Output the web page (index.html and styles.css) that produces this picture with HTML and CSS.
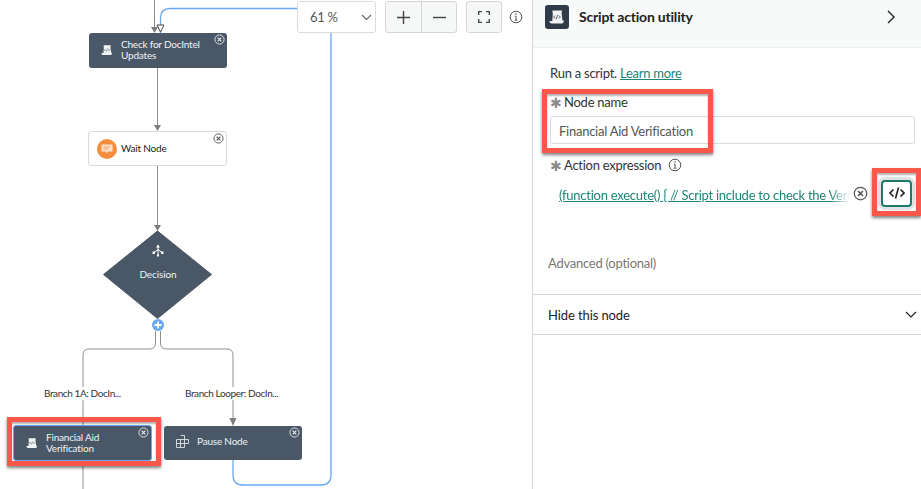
FILE: index.html
```html
<!DOCTYPE html>
<html lang="en">
<head>
    <meta charset="UTF-8">
    <title>Script action utility</title>
    <link rel="stylesheet" href="styles.css">
</head>
<body>

<svg class="defs" width="0" height="0">
    <symbol id="ico-close" viewBox="0 0 12 12">
        <circle cx="6" cy="6" r="5" fill="none" stroke="currentColor" stroke-width="1"/>
        <path d="M4 4l4 4M8 4l-4 4" fill="none" stroke="currentColor" stroke-width="1.3"/>
    </symbol>
    <symbol id="ico-info" viewBox="0 0 14 14">
        <circle cx="7" cy="7" r="5.8" fill="none" stroke="currentColor" stroke-width="1"/>
        <path d="M7 6.2v4M5.8 10.2h2.4M5.8 6.2H7" fill="none" stroke="currentColor" stroke-width="1"/>
        <circle cx="7" cy="4" r=".8" fill="currentColor"/>
    </symbol>
    <symbol id="ico-script" viewBox="0 0 16 16">
        <path d="M3.500 1.500h10c-.8 1-1 2-.8 3.500l.8 6.500h1.300c0 1.800-.8 3-2 3H2.500c-1.300 0-2-1-2-2.500h2.800L3.800 5c-.2-1.500-.5-2.700-.3-3.500z" fill="currentColor"/>
        <path d="M6 6.500L4.700 8 6 9.500M10 6.500L11.300 8 10 9.500M8.800 6 7.200 10" fill="none" stroke="var(--ico-bg)" stroke-width=".8"/>
    </symbol>
</svg>

<div class="page">
    <div class="canvas">
        <svg class="wires" width="532" height="489">
            <g fill="none" stroke="#8f8f8f" stroke-width="1">
                <path d="M154.500 0V27"/>
                <path d="M157.500 67V125"/>
                <path d="M157.500 165V225"/>
                <path d="M155.500 331V343q0 6-6 6H89q-6 0-6 6V489"/>
                <path d="M160.500 331V343q0 6 6 6H227q6 0 6 6V418"/>
            </g>
            <g fill="#7d7d7d">
                <path d="M151 27h7l-3.500 6z"/>
                <path d="M154 125h7l-3.500 6z"/>
                <path d="M154 225h7l-3.500 6z"/>
                <path d="M229.500 418h7L233 426z"/>
            </g>
            <g fill="none" stroke="#6aa8f5" stroke-width="1.300">
                <path d="M297 8.500H170q-9.500 0-9.500 9.500V33"/>
                <path d="M233 460V475q0 10 10 10H321q10 0 10-10V33"/>
            </g>
            <path d="M157 25h7l-3.500 7z" fill="#fff" stroke="#444" stroke-width="1"/>
        </svg>

        <div class="node node-dark node-check">
            <svg class="node-ico" width="12" height="12"><use href="#ico-script"/></svg>
            <span class="node-text">Check for DocIntel Updates</span>
            <svg class="node-close" width="11" height="11"><use href="#ico-close"/></svg>
        </div>

        <div class="node node-light node-wait">
            <span class="wait-ico">
                <svg width="12" height="10" viewBox="0 0 12 10">
                    <path d="M.5.5h11v7H7L5 9.500V7.500H.5z" fill="#fde3cf"/>
                    <path d="M2.500 3h7M2.500 5h5" stroke="#f68d3c" stroke-width=".8"/>
                </svg>
            </span>
            <span class="node-text">Wait Node</span>
            <svg class="node-close" width="11" height="11"><use href="#ico-close"/></svg>
        </div>

        <div class="decision">
            <svg class="decision-shape" width="110" height="90" viewBox="0 0 110 90">
                <path d="M54.500 1 108.500 44.500 54.500 88.500 .5 44.500z" fill="#4a5766" stroke="#4a5766" stroke-linejoin="round"/>
            </svg>
            <svg class="decision-ico" width="12" height="13" viewBox="0 0 12 13">
                <path d="M6 1.500V11M2 8.500 6 5.500 10 8.500" fill="none" stroke="#fff" stroke-width="1"/>
                <path d="M6 .5 8 3.500H4z" fill="#fff"/>
                <path d="M.5 7.500h2.500v2.500H.5zM9 7.500h2.500v2.500H9zM5 10.500h2v2H5z" fill="#fff"/>
            </svg>
            <span class="decision-text">Decision</span>
        </div>

        <span class="add-btn">
            <svg width="8" height="8" viewBox="0 0 8 8"><path d="M4 .5v7M.5 4h7" stroke="#fff" stroke-width="1.800"/></svg>
        </span>

        <span class="branch branch-a">Branch 1A: DocIn...</span>
        <span class="branch branch-b">Branch Looper: DocIn...</span>

        <div class="node node-dark node-selected node-aid">
            <svg class="node-ico" width="12" height="12"><use href="#ico-script"/></svg>
            <span class="node-text">Financial Aid Verification</span>
            <svg class="node-close" width="11" height="11"><use href="#ico-close"/></svg>
        </div>

        <div class="node node-dark node-pause">
            <svg class="node-ico" width="13" height="13" viewBox="0 0 13 13">
                <path d="M4.500.5h4v12h-8v-8h12v4H.500M4.500 4.500v8" fill="none" stroke="#dfe3e7" stroke-width=".9"/>
            </svg>
            <span class="node-text">Pause Node</span>
            <svg class="node-close" width="11" height="11"><use href="#ico-close"/></svg>
        </div>

        <div class="toolbar">
            <div class="zoom-select">
                <span>61 %</span>
                <svg width="11" height="7" viewBox="0 0 11 7"><path d="M1 1l4.500 4.500L10 1" fill="none" stroke="#666" stroke-width="1.100"/></svg>
            </div>
            <div class="btn-group">
                <span class="tool-btn">
                    <svg width="13" height="13" viewBox="0 0 13 13"><path d="M6.500 0v13M0 6.500h13" stroke="#444" stroke-width="1.400"/></svg>
                </span>
                <span class="tool-btn">
                    <svg width="13" height="13" viewBox="0 0 13 13"><path d="M0 6.500h13" stroke="#444" stroke-width="1.400"/></svg>
                </span>
            </div>
            <div class="btn-group">
                <span class="tool-btn tool-wide">
                    <svg width="12" height="12" viewBox="0 0 12 12"><path d="M.7 4V.7H4M8 .7h3.300V4M11.300 8v3.300H8M4 11.300H.7V8" fill="none" stroke="#444" stroke-width="1.300"/></svg>
                </span>
            </div>
            <svg class="tool-info" width="14" height="14"><use href="#ico-info"/></svg>
        </div>

        <div class="mark mark-aid"></div>
    </div>

    <div class="panel">
        <div class="panel-head">
            <span class="head-ico">
                <svg width="16" height="16"><use href="#ico-script"/></svg>
            </span>
            <span class="head-title">Script action utility</span>
            <svg width="9" height="14" viewBox="0 0 9 14"><path d="M1 1l6 6-6 6" fill="none" stroke="#222" stroke-width="1.400"/></svg>
        </div>

        <div class="panel-body">
            <p class="intro">Run a script. <a href="#">Learn more</a></p>

            <label class="field-label"><span class="star">&#10033;</span>Node name</label>
            <div class="text-input">Financial Aid Verification</div>

            <label class="field-label label-action">
                <span class="star">&#10033;</span>Action expression
                <svg class="label-info" width="14" height="14"><use href="#ico-info"/></svg>
            </label>
            <div class="expr-row">
                <a class="expr-link" href="#">(function execute() { // Script include to check the Verif</a>
                <svg class="expr-clear" width="15" height="15"><use href="#ico-close"/></svg>
                <span class="code-btn">
                    <svg width="16" height="12" viewBox="0 0 16 12"><path d="M4.500 2.500 1 6l3.500 3.500M11.500 2.500 15 6l-3.500 3.500M9.500 .5l-3 11" fill="none" stroke="#222" stroke-width="1.600"/></svg>
                </span>
            </div>

            <div class="advanced">Advanced (optional)</div>
        </div>

        <div class="accordion">
            <span>Hide this node</span>
            <svg width="12" height="7" viewBox="0 0 12 7"><path d="M1 1l5 5 5-5" fill="none" stroke="#222" stroke-width="1.200"/></svg>
        </div>

        <div class="mark mark-name"></div>
        <div class="mark mark-code"></div>
    </div>
</div>

</body>
</html>
```
FILE: styles.css
```css
* {
    box-sizing: border-box;
}
body {
    margin: 0;
    font-family: "Lato", "Open Sans", sans-serif;
    background-color: #fff;
    color: #2e2e2e;
    overflow: hidden;
}
a {
    color: #1f8476;
}
.defs {
    position: absolute;
}
.page {
    display: flex;
    width: 921px;
    height: 489px;
}

/* canvas */
.canvas {
    position: relative;
    width: 532px;
    flex: none;
}
.wires {
    position: absolute;
    left: 0;
    top: 0;
}
.node {
    position: absolute;
    display: flex;
    align-items: center;
    border-radius: 3px;
    font-size: 10px;
    line-height: 11px;
    letter-spacing: -0.2px;
    --ico-bg: #4a5766;
}
.node-dark {
    background-color: #4a5766;
    color: #f1f3f5;
}
.node-light {
    background-color: #fff;
    border: 1px solid #d9d9d9;
    color: #222;
}
.node-selected {
    border: 1px solid #6aa8f5;
}
.node-ico {
    flex: none;
    color: #f1f3f5;
    margin: 0 8px 0 12px;
}
.node-text {
    width: 84px;
}
.node-close {
    position: absolute;
    right: 2px;
    top: 1px;
    color: #e8ebee;
}
.node-light .node-close {
    color: #555;
}
.node-check {
    left: 89px;
    top: 33px;
    width: 138px;
    height: 35px;
    padding-bottom: 2px;
}
.node-wait {
    left: 88px;
    top: 131px;
    width: 139px;
    height: 35px;
}
.node-aid {
    left: 13px;
    top: 425px;
    width: 139px;
    height: 36px;
}
.node-pause {
    left: 164px;
    top: 426px;
    width: 138px;
    height: 34px;
    padding-bottom: 3px;
}
.wait-ico {
    display: flex;
    align-items: center;
    justify-content: center;
    width: 20px;
    height: 20px;
    margin: 0 4px 0 8px;
    border-radius: 50%;
    background-color: #f68d3c;
}
.decision {
    position: absolute;
    left: 103px;
    top: 230px;
    width: 110px;
    height: 90px;
    color: #f1f3f5;
}
.decision-shape {
    position: absolute;
    left: 0;
    top: 0;
}
.decision-ico {
    position: absolute;
    left: 49px;
    top: 14px;
}
.decision-text {
    position: absolute;
    left: 0;
    right: 0;
    top: 38px;
    text-align: center;
    font-size: 10px;
    letter-spacing: -0.1px;
}
.add-btn {
    position: absolute;
    left: 152px;
    top: 319px;
    width: 12px;
    height: 12px;
    display: flex;
    align-items: center;
    justify-content: center;
    border-radius: 50%;
    background-color: #6aa8f5;
}
.branch {
    position: absolute;
    top: 387px;
    font-size: 10px;
    line-height: 13px;
    letter-spacing: -0.4px;
    background-color: #fff;
    white-space: nowrap;
    color: #333;
}
.branch-a {
    left: 44px;
}
.branch-b {
    left: 185px;
}

/* zoom controls */
.toolbar {
    position: absolute;
    left: 297px;
    top: 1px;
    display: flex;
    align-items: center;
    gap: 9px;
}
.zoom-select {
    display: flex;
    align-items: center;
    justify-content: space-between;
    width: 79px;
    height: 32px;
    padding: 0 3px 0 12px;
    background-color: #fff;
    border: 1px solid #dcdcdc;
    border-radius: 3px;
    font-size: 13px;
    letter-spacing: -0.3px;
    color: #555;
}
.btn-group {
    display: flex;
    height: 32px;
    background-color: #f6f7f7;
    border: 1px solid #d6d6d6;
    border-radius: 3px;
}
.tool-btn {
    display: flex;
    align-items: center;
    justify-content: center;
    width: 35px;
}
.tool-btn + .tool-btn {
    border-left: 1px solid #d6d6d6;
}
.tool-wide {
    width: 34px;
}
.tool-info {
    color: #555;
    margin-left: -2px;
}

/* right panel */
.panel {
    position: relative;
    flex: 1;
    border-left: 1px solid #d4d4d4;
}
.panel-head {
    display: flex;
    align-items: center;
    height: 48px;
    padding: 0 25px 13px 12px;
    background-color: #f8f9f9;
    border-bottom: 1px solid #eee;
}
.head-ico {
    display: flex;
    align-items: center;
    justify-content: center;
    width: 24px;
    height: 24px;
    border-radius: 3px;
    background-color: #2f3b49;
    color: #f1f3f5;
    --ico-bg: #2f3b49;
}
.head-title {
    flex: 1;
    margin: 0 0 2px 10px;
    font-size: 14px;
    font-weight: 700;
    letter-spacing: -0.2px;
    color: #222;
}
.panel-body {
    height: 246px;
    padding: 17px 6px 0 15px;
    font-size: 13px;
    letter-spacing: -0.25px;
}
.intro {
    margin: 0 0 12px 2px;
    line-height: 17px;
    color: #333;
}
.field-label {
    display: flex;
    align-items: center;
    height: 16px;
    margin-left: 2px;
    color: #333;
}
.star {
    width: 14px;
    color: #8a8a8a;
    font-size: 14px;
}
.text-input {
    height: 28px;
    margin: 6px 0 0 2px;
    padding: 0 8px;
    line-height: 28px;
    border: 1px solid #d8dbdd;
    border-radius: 3px;
    color: #555;
}
.label-action {
    margin-top: 13px;
}
.label-info {
    margin-left: 7px;
    color: #555;
}
.expr-row {
    display: flex;
    align-items: center;
    margin-top: 6px;
    height: 28px;
}
.expr-link {
    width: 291px;
    margin: 3px 0 0 11px;
    white-space: nowrap;
    -webkit-mask-image: linear-gradient(to right, #000 93%, transparent);
    mask-image: linear-gradient(to right, #000 93%, transparent);
}
.expr-clear {
    margin-left: 3px;
    color: #555;
}
.code-btn {
    display: flex;
    align-items: center;
    justify-content: center;
    width: 31px;
    height: 27px;
    margin-left: 13px;
    border: 2px solid #1f7a6c;
    border-radius: 4px;
    background-color: #fff;
    box-shadow: 0 0 0 3px #dfe3e3;
}
.advanced {
    margin-top: 48px;
    color: #777;
}
.accordion {
    display: flex;
    align-items: center;
    justify-content: space-between;
    height: 41px;
    padding: 0 4px 0 15px;
    border-top: 1px solid #d6d6d6;
    border-bottom: 1px solid #d6d6d6;
    font-size: 13px;
    letter-spacing: -0.1px;
    color: #222;
}

/* red annotation boxes */
.mark {
    position: absolute;
    border: 5px solid #fa574b;
    box-shadow: 0 2px 3px rgba(0, 0, 0, 0.5), inset 0 2px 2px rgba(0, 0, 0, 0.3);
}
.mark-aid {
    left: 7px;
    top: 417px;
    width: 154px;
    height: 49px;
}
.mark-name {
    left: 9px;
    top: 89px;
    width: 171px;
    height: 64px;
}
.mark-code {
    left: 339px;
    top: 168px;
    width: 49px;
    height: 48px;
}
```
